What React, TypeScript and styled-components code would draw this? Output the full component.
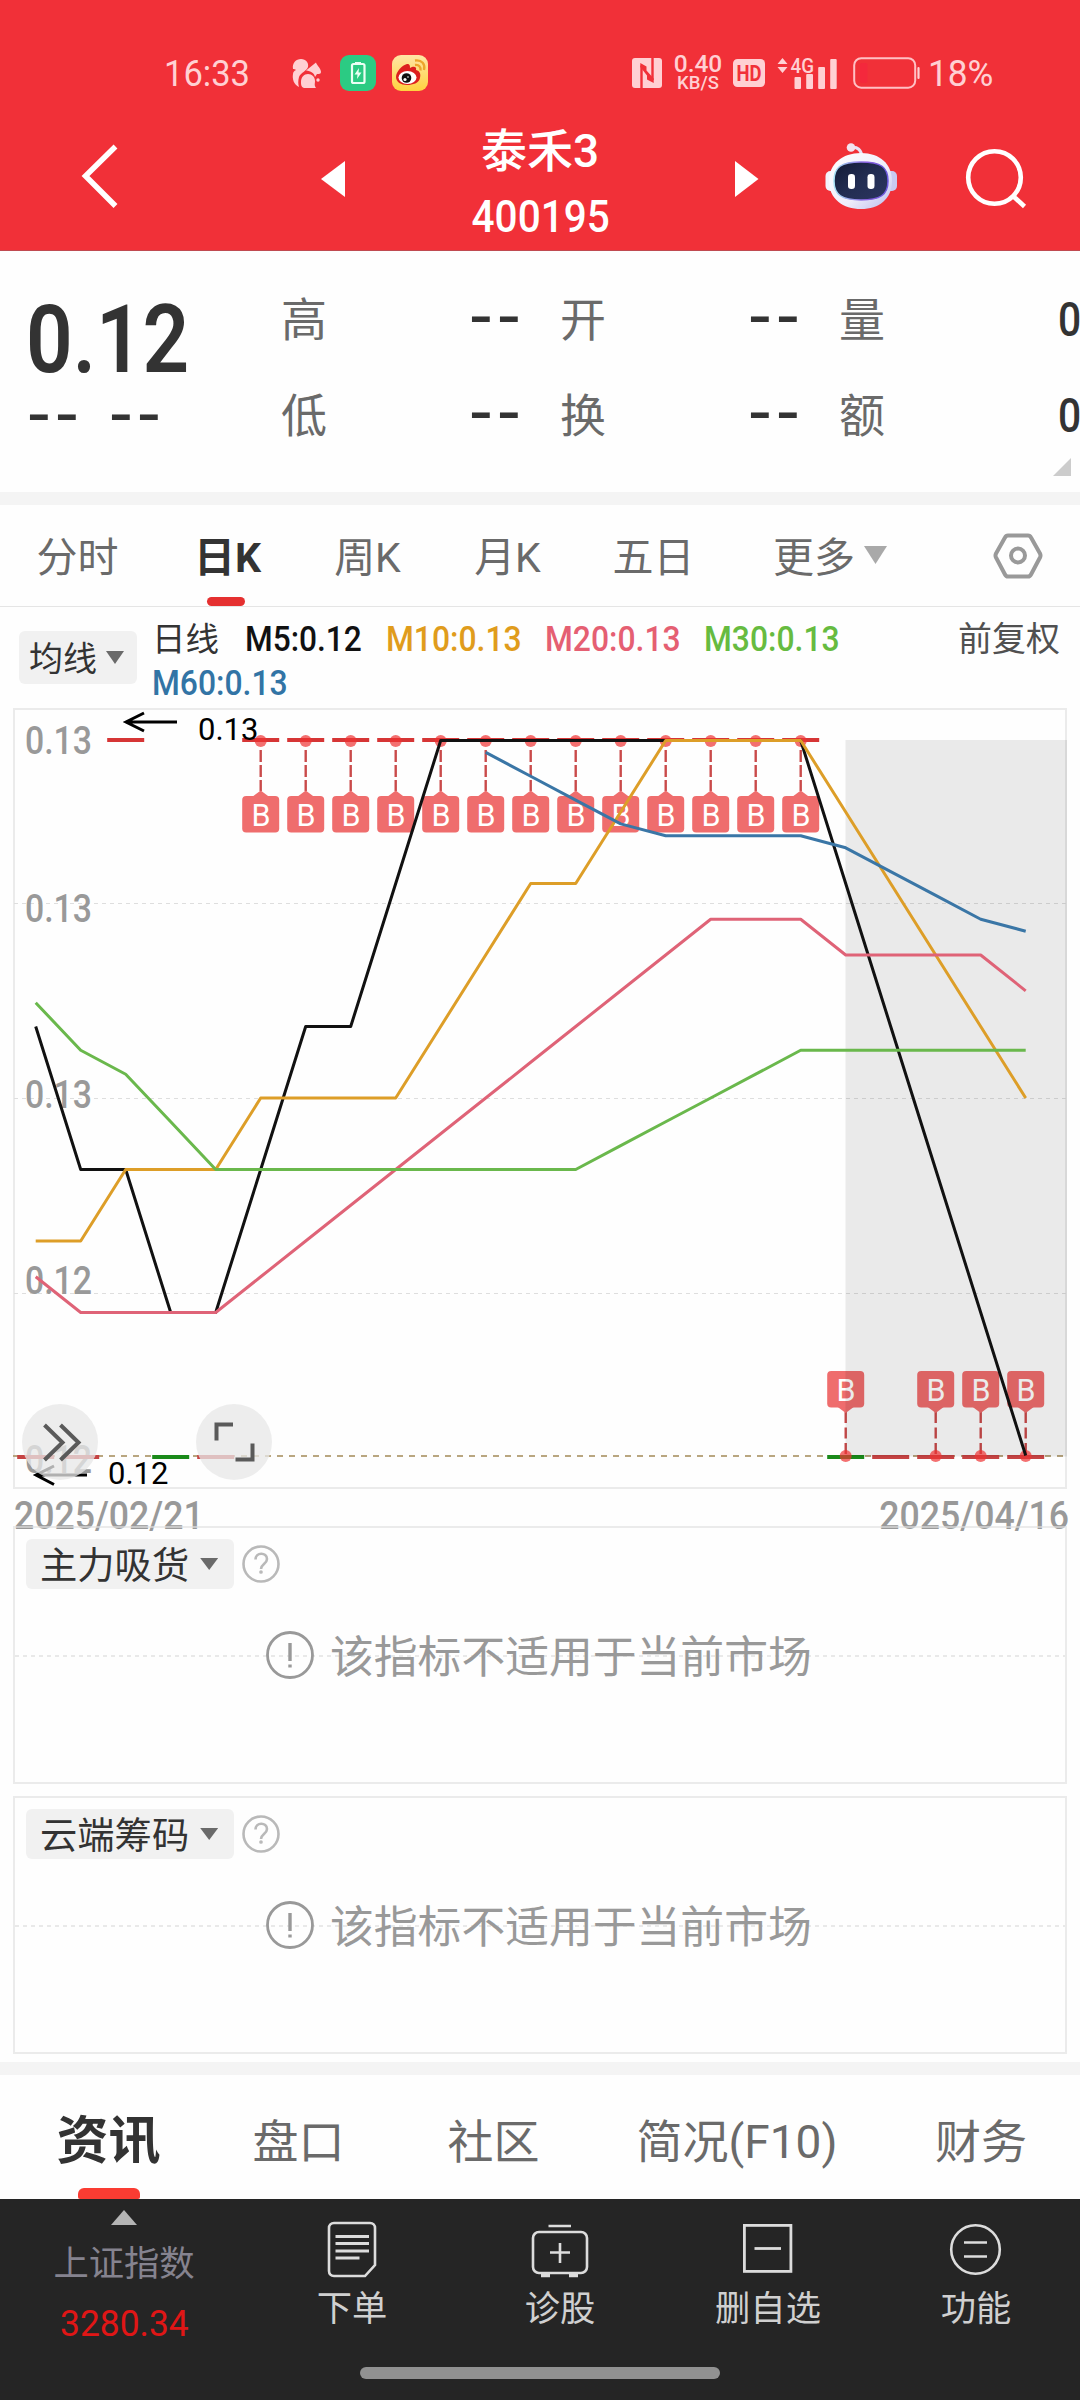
import React from 'react';
import styled, { createGlobalStyle } from 'styled-components';

const Global = createGlobalStyle`
  * { box-sizing: border-box; }
  body { margin: 0; background: #fff; }
  svg { overflow: visible; }
`;

const sans = `Roboto, "Noto Sans CJK SC", sans-serif`;

const Screen = styled.div`
  width: 1080px;
  height: 2400px;
  overflow: hidden;
  display: flex;
  flex-direction: column;
  background: #fefefe;
  font-family: ${sans};
  color: #333;
`;

/* Text squeezed horizontally to imitate a narrow DIN-like face */
const Narrow = styled.span<{ $w: number; $sx: number; $origin?: string }>`
  display: inline-block;
  width: ${p => p.$w}px;
  white-space: nowrap;
  transform: scaleX(${p => p.$sx});
  transform-origin: ${p => p.$origin ?? 'left'} center;
`;

/* ---------- header ---------- */
const Header = styled.header`
  height: 251px;
  flex: none;
  background: #f13038;
  border-bottom: 1px solid #c04a50;
  color: #fff;
`;

const StatusBar = styled.div`
  height: 113px;
  padding: 33px 0 0 164px;
  display: flex;
  align-items: center;
  color: #ffd0d3;
`;

const StatusGroup = styled.div<{ $ml?: number; $w?: number }>`
  display: flex;
  align-items: center;
  flex: none;
  margin-left: ${p => p.$ml ?? 0}px;
  width: ${p => (p.$w ? `${p.$w}px` : 'auto')};
`;

const Clock = styled.div`
  font-size: 37.5px;
  line-height: 44px;
`;

const NetSpeed = styled.div`
  width: 54px;
  display: flex;
  flex-direction: column;
  align-items: center;
  font-weight: 500;
  font-size: 24.5px;
  line-height: 20px;
  small { font-size: 18.5px; line-height: 17px; margin-top: 1px; }
`;

const TitleBar = styled.div`
  height: 138px;
  display: flex;
`;

const BarCell = styled.div<{ $w: number; $pt?: number }>`
  width: ${p => p.$w}px;
  padding-top: ${p => p.$pt ?? 0}px;
  flex: none;
  svg { display: block; }
`;

const TitleBlock = styled.div`
  width: 390px;
  flex: none;
  text-align: center;
`;

const StockName = styled.div`
  font-size: 46px;
  font-weight: 500;
  line-height: 60px;
  padding-top: 8px;
`;

const StockCode = styled.div`
  font-size: 45px;
  font-weight: 500;
  line-height: 50px;
  padding-top: 11px;
`;

/* ---------- quote ---------- */
const Quote = styled.section`
  height: 241px;
  flex: none;
  display: flex;
  position: relative;
`;

const PriceCol = styled.div`
  width: 281px;
  padding-left: 25px;
  flex: none;
`;

const Price = styled.div`
  font-size: 95px;
  font-weight: 600;
  line-height: 100px;
  padding: 39px 0 0 1px;
`;

const Dashes = styled.span`
  display: block;
  width: 56px;
  font-family: "Liberation Mono", monospace;
  font-weight: 700;
  font-size: 46.6px;
  line-height: 50px;
  letter-spacing: -7.2px;
  white-space: nowrap;
  transform: translateX(-5px) scaleX(1.35);
  transform-origin: left center;
  color: #333;
`;

const ChangeRow = styled.div`
  display: flex;
  gap: 26px;
  margin-top: 2px;
`;

const StatGrid = styled.div`
  display: grid;
  grid-template-columns: 279px 279px 243px;
  grid-auto-rows: 96px;
  padding-top: 20px;
  height: 212px;
`;

const Stat = styled.div`
  display: flex;
  align-items: center;
  justify-content: space-between;
  padding-right: 37px;
  &:nth-child(3n) { padding-right: 0; }
`;

const StatLabel = styled.span`
  font-size: 46px;
  line-height: 60px;
  padding-top: 1px;
  color: #6a6a6a;
`;

const StatZero = styled.span`
  font-size: 48px;
  font-weight: 500;
`;

const Corner = styled.i`
  position: absolute;
  right: 9px;
  bottom: 16px;
  border-left: 18px solid transparent;
  border-bottom: 18px solid #ccc;
`;

const Band = styled.div`
  height: 13px;
  flex: none;
  background: #f4f4f4;
`;

/* ---------- period tabs ---------- */
const PeriodTabs = styled.nav`
  height: 102px;
  flex: none;
  display: flex;
  border-bottom: 1px solid #e5e5e5;
`;

const PeriodTab = styled.div<{ $w: number; $on?: boolean }>`
  width: ${p => p.$w}px;
  flex: none;
  display: flex;
  flex-direction: column;
  align-items: center;
  justify-content: space-between;
  font-size: 41px;
  line-height: 60px;
  padding-top: 23px;
  font-weight: ${p => (p.$on ? 700 : 400)};
  color: ${p => (p.$on ? '#333' : '#6a6a6a')};
`;

const PeriodMark = styled.i`
  width: 38px;
  height: 9px;
  border-radius: 5px;
  background: #e53030;
  margin-right: 4px;
`;

const MoreTab = styled.div`
  margin-left: 46px;
  width: 222px;
  display: flex;
  gap: 9px;
  font-size: 41px;
  line-height: 60px;
  padding-top: 23px;
  color: #6a6a6a;
`;

const Caret = styled.i<{ $w: number; $h: number; $c: string; $mt?: number }>`
  flex: none;
  margin-top: ${p => p.$mt ?? 0}px;
  width: ${p => p.$w}px;
  height: ${p => p.$h}px;
  background: ${p => p.$c};
  clip-path: polygon(0 0, 100% 0, 50% 100%);
`;

/* ---------- legend ---------- */
const LegendBar = styled.div`
  height: 101px;
  flex: none;
  display: flex;
  padding: 0 20px 0 19px;
`;

const Picker = styled.div<{ $w: number; $h: number; $fs: number; $gap: number; $pl: number }>`
  display: flex;
  flex: none;
  align-items: center;
  gap: ${p => p.$gap}px;
  padding-left: ${p => p.$pl}px;
  width: ${p => p.$w}px;
  height: ${p => p.$h}px;
  border-radius: 6px;
  background: #f1f1f1;
  color: #333;
  font-size: ${p => p.$fs}px;
  line-height: ${p => p.$h}px;
`;

const PickerText = styled.span`
  padding-top: 3px;
`;

const PickerSlot = styled.div`
  padding-top: 24px;
`;

const LegendItems = styled.div`
  width: 720px;
  flex: none;
  margin-left: 15px;
  padding-top: 11px;
  display: flex;
  flex-wrap: wrap;
  align-content: flex-start;
  font-size: 35px;
  font-weight: 500;
  line-height: 44px;
`;

const LegendItem = styled.span<{ $w: number; $c: string }>`
  width: ${p => p.$w}px;
  color: ${p => p.$c};
  white-space: nowrap;
`;

const LegendName = styled(LegendItem)`
  font-size: 33.5px;
  font-weight: 400;
`;

const Adjust = styled.div`
  margin-left: auto;
  font-size: 34px;
  line-height: 44px;
  padding-top: 10px;
  color: #505050;
`;

/* ---------- chart ---------- */
const ChartBox = styled.section`
  position: relative;
  height: 781px;
  flex: none;
  svg { display: block; }
`;

const RoundButton = styled.button<{ $x: number }>`
  position: absolute;
  left: ${p => p.$x}px;
  top: 696px;
  width: 76px;
  height: 76px;
  padding: 0;
  border: 0;
  border-radius: 50%;
  background: rgba(231, 231, 231, 0.76);
`;

const Dates = styled.div`
  height: 37px;
  flex: none;
  padding: 0 12px 0 14px;
  display: flex;
  justify-content: space-between;
  font-size: 38.5px;
  font-weight: 500;
  line-height: 54px;
  color: #999;
`;

/* ---------- sub indicator panels ---------- */
const SubPanel = styled.section<{ $mb: number }>`
  position: relative;
  height: 258px;
  flex: none;
  margin: 0 13px ${p => p.$mb}px;
  border: 2px solid rgba(225, 225, 225, 0.65);
`;

const SubHead = styled.div`
  display: flex;
  align-items: center;
  gap: 8px;
  padding: 11px 0 0 11px;
`;

const SubEmpty = styled.div`
  height: 64px;
  margin-top: 34px;
  display: flex;
  align-items: center;
  gap: 16px;
  padding-left: 251px;
  background: repeating-linear-gradient(90deg, #e9e9e9 0 4px, transparent 4px 8px) 0 32px / 100% 2px no-repeat;
  font-size: 43.8px;
  color: #999;
  line-height: 64px;
  svg { flex: none; }
`;

const EmptyText = styled.span`
  padding-top: 5px;
`;

/* ---------- content tabs ---------- */
const ContentTabs = styled.nav`
  height: 124px;
  flex: none;
  display: flex;
  overflow: hidden;
`;

const ContentTab = styled.div<{ $w: number; $on?: boolean }>`
  width: ${p => p.$w}px;
  flex: none;
  display: flex;
  flex-direction: column;
  align-items: center;
  justify-content: space-between;
  padding-top: 34px;
  line-height: 66px;
  font-size: ${p => (p.$on ? 52 : 46)}px;
  font-weight: ${p => (p.$on ? 700 : 400)};
  color: ${p => (p.$on ? '#333' : '#6a6a6a')};
`;

const ContentMark = styled.i`
  width: 62px;
  height: 11px;
  border-radius: 6px 6px 2px 2px;
  background: #fa3c32;
`;

/* ---------- bottom bar ---------- */
const BottomBar = styled.footer`
  height: 201px;
  flex: none;
  background: #252525;
  display: flex;
  flex-direction: column;
  align-items: center;
`;

const BottomRow = styled.div`
  height: 168px;
  width: 1080px;
  display: flex;
`;

const IndexCell = styled.div`
  width: 248px;
  flex: none;
  display: flex;
  flex-direction: column;
  align-items: center;
  padding-top: 11px;
`;

const UpCaret = styled.i`
  width: 26px;
  height: 15px;
  background: #b5b5b5;
  clip-path: polygon(50% 0, 100% 100%, 0 100%);
`;

const IndexName = styled.div`
  font-size: 35.3px;
  line-height: 50px;
  margin-top: 14px;
  color: #85838f;
`;

const IndexValue = styled.div`
  font-size: 36.5px;
  line-height: 50px;
  margin-top: 10px;
  color: #e01616;
`;

const Action = styled.div`
  width: 208px;
  flex: none;
  display: flex;
  flex-direction: column;
  align-items: center;
  padding-top: 21px;
  font-size: 35.3px;
  line-height: 50px;
  color: #d0d0d0;
  svg { display: block; margin-bottom: 6px; }
`;

const HomeBar = styled.i`
  width: 360px;
  height: 12px;
  border-radius: 6px;
  background: #919191;
`;

/* ---------- chart data ---------- */
const BASE = 740.5;
const SPAN = 715;
const px = (i: number) => 35.7 + 45 * i;
const toPath = (vals: number[], unit: number, start = 0) =>
  vals.map((v, k) => `${px(start + k).toFixed(1)},${(BASE + (v * SPAN) / unit).toFixed(1)}`).join(' ');

const lines = [
  { c: '#111', p: toPath([2, 3, 3, 4, 4, 3, 2, 2, 1, 0, 0, 0, 0, 0, 0, 0, 0, 0, 1, 2, 3, 4, 5], 5) },
  { c: '#dd9e28', p: toPath([7, 7, 6, 6, 6, 5, 5, 5, 5, 4, 3, 2, 2, 1, 0, 0, 0, 0, 1, 2, 3, 4, 5], 10) },
  { c: '#df6377', p: toPath([15, 16, 16, 16, 16, 15, 14, 13, 12, 11, 10, 9, 8, 7, 6, 5, 5, 5, 6, 6, 6, 6, 7], 20) },
  { c: '#6ab84c', p: toPath([11, 13, 14, 16, 18, 18, 18, 18, 18, 18, 18, 18, 18, 17, 16, 15, 14, 13, 13, 13, 13, 13, 13], 30) },
  { c: '#3a76a6', p: toPath([1, 3, 5, 7, 8, 8, 8, 8, 9, 11, 13, 15, 16], 60, 10) },
];

const topSignals = Array.from({ length: 13 }, (_, k) => k + 5);
const bottomSignals = [18, 20, 21, 22];
const lowBars = [
  { i: 0, c: '#c64343' }, { i: 1, c: '#c64343' }, { i: 3, c: '#1a8a1a' }, { i: 4, c: '#c64343' },
  { i: 18, c: '#1a8a1a' }, { i: 19, c: '#c64343' }, { i: 20, c: '#c64343' }, { i: 21, c: '#c64343' }, { i: 22, c: '#c64343' },
];
const axis = [
  { y: 753.5, t: '0.13' }, { y: 922, t: '0.13' }, { y: 1108, t: '0.13' }, { y: 1294, t: '0.12' }, { y: 1473, t: '0.12' },
];

function Signal({ i, low }: { i: number; low?: boolean }) {
  const x = px(i);
  const boxY = low ? 1371 : 796;
  const tip = low ? `${x - 8},1407 ${x + 8},1407 ${x},1413` : `${x - 8},796.5 ${x + 8},796.5 ${x},790.5`;
  return (
    <g>
      <line x1={x} x2={x} y1={low ? 1412 : 750} y2={low ? 1455 : 791} stroke="#c94a4a" strokeWidth="2.4" strokeDasharray={low ? '11 4.5' : '12 3'} />
      <polygon points={tip} fill="#ef6d6d" />
      <rect x={x - 18.5} y={boxY} width="37" height="36.5" rx="4" fill="#ef6d6d" />
      <text x={x + 0.3} y={boxY + 29.5} fontSize="31" textAnchor="middle" fill="#fff" textLength="19" lengthAdjust="spacingAndGlyphs">B</text>
    </g>
  );
}

function KChart() {
  return (
    <svg width="1080" height="781" viewBox="0 708 1080 781" fontFamily="Roboto, sans-serif">
      <rect x="14" y="709" width="1052" height="779" fill="none" stroke="#ebebeb" strokeWidth="2" />
      {[903.5, 1098.5, 1293.5].map(y => (
        <line key={y} x1="14" x2="1066" y1={y} y2={y} stroke="#dedede" strokeWidth="1" strokeDasharray="4 4" />
      ))}
      {axis.map((a, k) => (
        <text key={k} x="25" y={a.y} fontSize="38.5" fontWeight="500" fill="#999" textLength="67" lengthAdjust="spacingAndGlyphs">{a.t}</text>
      ))}
      <line x1="13" x2="1066" y1="1456" y2="1456" stroke="#b9a680" strokeWidth="2" strokeDasharray="6 6" />
      {[2, ...topSignals].map(i => (
        <rect key={i} x={px(i) - 18.5} y="738" width="37" height="4" fill="#d63535" />
      ))}
      {lowBars.map(b => (
        <rect key={b.i} x={px(b.i) - 18.5} y="1455" width="37" height="4" fill={b.c} />
      ))}
      {topSignals.map(i => <Signal key={i} i={i} />)}
      {bottomSignals.map(i => <Signal key={i} i={i} low />)}
      <rect x="845.5" y="740" width="221.5" height="716.5" fill="rgba(0,0,0,0.08)" />
      {topSignals.map(i => <circle key={i} cx={px(i)} cy="741" r="6" fill="#e33" fillOpacity=".7" />)}
      {bottomSignals.map(i => <circle key={i} cx={px(i)} cy="1456" r="6" fill="#e33" fillOpacity=".7" />)}
      {lines.map(l => (
        <polyline key={l.c} points={l.p} fill="none" stroke={l.c} strokeWidth="3" strokeLinejoin="round" />
      ))}
      <g fill="none" stroke="#000" strokeWidth="3">
        <path d="M177 722H126M144 713L126 722L144 731" />
        <path d="M87 1475H36M54 1466L36 1475L54 1484.5" />
      </g>
      <text x="198" y="739.5" fontSize="31">0.13</text>
      <text x="108" y="1483.5" fontSize="31">0.12</text>
    </svg>
  );
}

/* ---------- icons ---------- */
const Squirrel = () => (
  <svg width="29" height="29" viewBox="0 0 29 29" fill="#ffd0d3">
    <path d="M1 10C0 4 4 0 9 0c5 0 8 4 7 8-1 4-7 5-9 10-1 4-1 7 0 10C2 26 0 20 1 15c0-2 1-3 3-4C3 10 2 10 1 10z" />
    <path d="M14 11.500l10-8c1 3 5 6 5 9.500 0 2-2 2-4 2l-2 3c-1-4-4-6-9-6.500z" />
    <path d="M9 23c0-5 3-8 7-8s7 3 7 7c0 3-1 4 1 7H12c-3-1-3-4-3-6z" />
    <circle cx="26" cy="21" r="1.700" />
  </svg>
);

const PowerApp = () => (
  <svg width="36" height="36" viewBox="0 0 36 36">
    <rect width="36" height="36" rx="9" fill="#2bcb83" />
    <rect x="12" y="9" width="12.500" height="19" rx="1.500" fill="none" stroke="#eafff4" strokeWidth="2.200" />
    <rect x="15" y="7" width="6" height="3" fill="#eafff4" />
    <path d="M19 13l-4.500 6.500h3l-.5 4.500 4.500-6.500h-3z" fill="#eafff4" />
  </svg>
);

const WeiboApp = () => (
  <svg width="36" height="36" viewBox="0 0 36 36">
    <defs>
      <linearGradient id="wb" x1="0" y1="0" x2="0" y2="1">
        <stop offset="0" stopColor="#ffe6a6" /><stop offset="1" stopColor="#ffd23f" />
      </linearGradient>
    </defs>
    <rect width="36" height="36" rx="9" fill="url(#wb)" />
    <path d="M4 22c0-5 6-12 11-13 3 0 3 2 3 4 3-2 7-2 6 2 4 1 5 4 4 8-1 5-7 7-13 7S4 27 4 22z" fill="#dd1f1f" />
    <ellipse cx="15.500" cy="22.500" rx="9" ry="6.500" fill="#fff" />
    <circle cx="14.500" cy="23" r="4.800" fill="#111" />
    <circle cx="13" cy="24.500" r="1.600" fill="#fff" /><circle cx="16" cy="22" r=".8" fill="#fff" />
    <path d="M23 10c4-.5 6 2 5.500 5.500M23 5.500c7-1 10.500 4 9 9.500" fill="none" stroke="#eda52c" strokeWidth="2.300" />
  </svg>
);

const NfcIcon = () => (
  <svg width="30" height="30" viewBox="0 0 30 30">
    <rect width="30" height="30" rx="3" fill="#ffd0d3" />
    <path d="M9.500 30V7.500M20.500 22V0" fill="none" stroke="#f13038" strokeWidth="2.400" />
    <path d="M8.300 5L14.500 8.500v4L21.700 20.500V25L15 21.500v-4L8.300 9z" fill="#f13038" />
  </svg>
);

const HdIcon = () => (
  <svg width="32" height="28" viewBox="0 0 32 28">
    <rect width="32" height="28" rx="4.500" fill="#ffd0d3" />
    <text x="16" y="22" fontFamily="Roboto, sans-serif" fontWeight="700" fontSize="22.500" textAnchor="middle" textLength="25" lengthAdjust="spacingAndGlyphs" fill="#f13038">HD</text>
  </svg>
);

const SignalIcon = () => (
  <svg width="60" height="34" viewBox="777 54 60 34" fill="#ffd0d3">
    <path d="M777.500 62l5-6 5 6zM777.500 65l5 6 5-6z" />
    <text x="790.500" y="71" fontFamily="Roboto, sans-serif" fontWeight="500" fontSize="21" textLength="23.500" lengthAdjust="spacingAndGlyphs">4G</text>
    <rect x="794.500" y="75" width="6.500" height="12" rx="1" />
    <rect x="806.200" y="72" width="6.800" height="15" rx="1" />
    <rect x="818.200" y="65" width="6.800" height="22" rx="1" />
    <rect x="830.200" y="57" width="6.500" height="30" rx="1" />
  </svg>
);

const BatteryIcon = () => (
  <svg width="68" height="32" viewBox="0 0 68 32">
    <rect x="1.200" y="1.200" width="61" height="29.500" rx="7" fill="none" stroke="#ffc0c4" strokeWidth="2" />
    <rect x="7" y="6" width="7.500" height="20" rx="2" fill="#f4283c" />
    <path d="M65.500 11v10" stroke="#ffd0d3" strokeWidth="2.200" strokeLinecap="round" />
  </svg>
);

const Robot = () => (
  <svg width="72" height="68" viewBox="825 142 72 68">
    <defs>
      <linearGradient id="rbHead" x1="0" y1="0" x2="1" y2="1">
        <stop offset="0" stopColor="#fff" /><stop offset=".6" stopColor="#efedfb" /><stop offset="1" stopColor="#b9bbec" />
      </linearGradient>
      <linearGradient id="rbFace" x1="0" y1="0" x2="1" y2="1">
        <stop offset="0" stopColor="#121a35" /><stop offset=".5" stopColor="#232d52" /><stop offset="1" stopColor="#2b3560" />
      </linearGradient>
      <linearGradient id="rbRim" x1="0" y1="0" x2="1" y2="0">
        <stop offset="0" stopColor="#a8e3f5" /><stop offset=".6" stopColor="#8a5fe0" /><stop offset="1" stopColor="#6a57dd" />
      </linearGradient>
    </defs>
    <path d="M851 147.500c6-1 11 2 11 11" fill="none" stroke="#e9e3f7" strokeWidth="3" />
    <circle cx="851" cy="147.500" r="4.300" fill="#f3e3f0" />
    <rect x="825.500" y="171" width="12" height="20" rx="5" fill="#f2f1fb" />
    <rect x="885" y="171" width="12" height="20" rx="5" fill="#c9c9f1" />
    <path d="M861 153c19 0 31 11 31 28 0 18-13 28-31 28s-32-10-32-28c0-17 13-28 32-28z" fill="url(#rbHead)" />
    <path d="M861 162c20 0 27 5 27 19 0 14-8 19-27 19S834 195 834 181c0-14 7-19 27-19z" fill="url(#rbFace)" stroke="url(#rbRim)" strokeWidth="1.500" />
    <rect x="848" y="174" width="7" height="15" rx="3.200" fill="#fff" />
    <rect x="867.500" y="174" width="7" height="15" rx="3.200" fill="#fff" />
  </svg>
);

const HelpIcon = () => (
  <svg width="38" height="38" viewBox="0 0 38 38" fill="none" stroke="#b9b9b9" strokeWidth="2.600">
    <circle cx="19" cy="19" r="17.500" />
    <path d="M13.500 14.500c0-7.500 11.500-7.500 11.500-.5 0 5-6 5-6 10" />
    <circle cx="19" cy="27" r="1.100" fill="#b9b9b9" strokeWidth="1.500" />
  </svg>
);

const AlertIcon = () => (
  <svg width="48" height="48" viewBox="0 0 48 48" fill="none" stroke="#999" strokeWidth="2.800">
    <circle cx="24" cy="24" r="22.500" />
    <path d="M24 12v18M24 33.500v3" strokeWidth="3.400" />
  </svg>
);

const OrderIcon = () => (
  <svg width="50" height="58" viewBox="0 0 50 58" fill="none" stroke="#dcdcdc" strokeWidth="2.600">
    <path d="M7 3h36c3 0 5 2 5 5v37L38 56H7c-3 0-5-2-5-5V8c0-3 2-5 5-5z" />
    <path d="M8.500 16.500h33.500M8.500 23.500h33.500M8.500 31h33.500M8.500 38h24" strokeWidth="3" />
  </svg>
);
const DiagnoseIcon = () => (
  <svg width="58" height="58" viewBox="0 0 58 58" fill="none" stroke="#dcdcdc" strokeWidth="2.600">
    <rect x="2" y="12" width="54" height="41" rx="6" />
    <path d="M17.500 6h22.500M19 32.500h20M29 23v20" />
    <path d="M10 55.500h9M38 55.500h9" strokeWidth="3.500" />
  </svg>
);
const RemoveIcon = () => (
  <svg width="50" height="58" viewBox="0 0 50 58" fill="none" stroke="#dcdcdc" strokeWidth="2.800">
    <rect x="1.400" y="5.400" width="46.500" height="46" />
    <path d="M11.500 28.500h26.500" />
  </svg>
);
const FunctionIcon = () => (
  <svg width="52" height="58" viewBox="0 0 52 58" fill="none" stroke="#dcdcdc" strokeWidth="2.600">
    <circle cx="25.500" cy="29.500" r="24.300" />
    <path d="M14 22.500h23M14 36.500h23" />
  </svg>
);

const SubIndicator = ({ name, mb }: { name: string; mb: number }) => (
  <SubPanel $mb={mb}>
    <SubHead>
      <Picker $w={208} $h={50} $fs={37.3} $gap={11} $pl={14}>
        <PickerText>{name}</PickerText>
        <Caret $w={18} $h={12} $c="#6a6a6a" />
      </Picker>
      <HelpIcon />
    </SubHead>
    <SubEmpty>
      <AlertIcon />
      <EmptyText>该指标不适用于当前市场</EmptyText>
    </SubEmpty>
  </SubPanel>
);

const stats = [
  ['高', '--'], ['开', '--'], ['量', '0'],
  ['低', '--'], ['换', '--'], ['额', '0'],
];

const actions = [
  { t: '下单', icon: <OrderIcon /> },
  { t: '诊股', icon: <DiagnoseIcon /> },
  { t: '删自选', icon: <RemoveIcon /> },
  { t: '功能', icon: <FunctionIcon /> },
];

export default function App() {
  return (
    <Screen>
      <Global />
      <Header>
        <StatusBar>
          <Clock><Narrow $w={128} $sx={0.92}>16:33</Narrow></Clock>
          <StatusGroup><Squirrel /></StatusGroup>
          <StatusGroup $ml={19}><PowerApp /></StatusGroup>
          <StatusGroup $ml={16} $w={240}><WeiboApp /></StatusGroup>
          <StatusGroup><NfcIcon /></StatusGroup>
          <StatusGroup $ml={9}><NetSpeed>0.40<small>KB/S</small></NetSpeed></StatusGroup>
          <StatusGroup $ml={8}><HdIcon /></StatusGroup>
          <StatusGroup $ml={12}><SignalIcon /></StatusGroup>
          <StatusGroup $ml={16}><BatteryIcon /></StatusGroup>
          <StatusGroup $ml={7}><Clock><Narrow $w={70} $sx={0.94}>18%</Narrow></Clock></StatusGroup>
        </StatusBar>
        <TitleBar>
          <BarCell $w={320}>
            <svg width="320" height="138" viewBox="0 113 320 138" fill="none" stroke="#fff" strokeWidth="5.500">
              <path d="M115.500 146.500L85.500 176L115.500 206" />
            </svg>
          </BarCell>
          <BarCell $w={25}>
            <svg width="25" height="138" viewBox="320 113 25 138" fill="#fff"><path d="M345 161v36L321 179z" /></svg>
          </BarCell>
          <TitleBlock>
            <StockName>泰禾3</StockName>
            <StockCode><Narrow $w={152} $sx={0.9} $origin="center">400195</Narrow></StockCode>
          </TitleBlock>
          <BarCell $w={90}>
            <svg width="90" height="138" viewBox="735 113 90 138" fill="#fff"><path d="M735 161v36L758.500 179z" /></svg>
          </BarCell>
          <BarCell $w={141} $pt={29}>
            <Robot />
          </BarCell>
          <BarCell $w={114}>
            <svg width="114" height="138" viewBox="966 113 114 138" fill="none" stroke="#fff" strokeWidth="4.600">
              <circle cx="994.500" cy="177.500" r="26.300" />
              <path d="M1013 196l11.500 10.500" />
            </svg>
          </BarCell>
        </TitleBar>
      </Header>

      <Quote>
        <PriceCol>
          <Price><Narrow $w={190} $sx={0.86}>0.12</Narrow></Price>
          <ChangeRow><Dashes>--</Dashes><Dashes>--</Dashes></ChangeRow>
        </PriceCol>
        <StatGrid>
          {stats.map(([k, v]) => (
            <Stat key={k}>
              <StatLabel>{k}</StatLabel>
              {v === '0' ? <StatZero><Narrow $w={24} $sx={0.85}>0</Narrow></StatZero> : <Dashes>{v}</Dashes>}
            </Stat>
          ))}
        </StatGrid>
        <Corner />
      </Quote>

      <Band />
      <PeriodTabs>
        <PeriodTab $w={155}>分时</PeriodTab>
        <PeriodTab $w={145} $on>日K<PeriodMark /></PeriodTab>
        <PeriodTab $w={135}>周K</PeriodTab>
        <PeriodTab $w={145}>月K</PeriodTab>
        <PeriodTab $w={147}>五日</PeriodTab>
        <MoreTab>更多<Caret $w={23} $h={18} $c="#a9a9a9" $mt={18} /></MoreTab>
        <svg width="50" height="100" viewBox="995 505 50 100" fill="none" stroke="#999" strokeWidth="4" strokeLinejoin="round">
          <path d="M1008 535.500h20q2 0 3 2l9 16q1 2 0 4l-9 17q-1 2-3 2h-20q-2 0-3-2l-9-17q-1-2 0-4l9-16q1-2 3-2z" />
          <circle cx="1018" cy="555.500" r="7" />
        </svg>
      </PeriodTabs>

      <LegendBar>
        <PickerSlot>
          <Picker $w={118} $h={53} $fs={34} $gap={9} $pl={10}>
            <PickerText>均线</PickerText><Caret $w={18} $h={13} $c="#6a6a6a" />
          </Picker>
        </PickerSlot>
        <LegendItems>
          <LegendName $w={93} $c="#333">日线</LegendName>
          <LegendItem $w={141} $c="#111"><Narrow $w={130} $sx={0.905}>M5:0.12</Narrow></LegendItem>
          <LegendItem $w={159} $c="#e09c1c"><Narrow $w={150} $sx={0.91}>M10:0.13</Narrow></LegendItem>
          <LegendItem $w={159} $c="#e55f72"><Narrow $w={150} $sx={0.91}>M20:0.13</Narrow></LegendItem>
          <LegendItem $w={159} $c="#66bb40"><Narrow $w={150} $sx={0.91}>M30:0.13</Narrow></LegendItem>
          <LegendItem $w={159} $c="#3274a5"><Narrow $w={150} $sx={0.91}>M60:0.13</Narrow></LegendItem>
        </LegendItems>
        <Adjust>前复权</Adjust>
      </LegendBar>

      <ChartBox>
        <KChart />
        <RoundButton $x={22}>
          <svg width="76" height="76" viewBox="22 1404 76 76" fill="none" stroke="#5a5a5a" strokeWidth="4">
            <path d="M44.500 1425L62.500 1442.500L44.500 1460M60.500 1425L78.500 1442.500L60.500 1460" />
          </svg>
        </RoundButton>
        <RoundButton $x={196}>
          <svg width="76" height="76" viewBox="196 1404 76 76" fill="none" stroke="#5a5a5a" strokeWidth="4">
            <path d="M233 1424.500H216.500V1440.500M252.500 1443.500V1459.500H235.500" />
          </svg>
        </RoundButton>
      </ChartBox>

      <Dates>
        <Narrow $w={200} $sx={0.925}>2025/02/21</Narrow>
        <Narrow $w={204} $sx={0.925} $origin="right">2025/04/16</Narrow>
      </Dates>

      <SubIndicator name="主力吸货" mb={12} />
      <SubIndicator name="云端筹码" mb={8} />

      <Band />
      <ContentTabs>
        <ContentTab $w={217} $on>资讯<ContentMark /></ContentTab>
        <ContentTab $w={163}>盘口</ContentTab>
        <ContentTab $w={227}>社区</ContentTab>
        <ContentTab $w={260}>简况(F10)</ContentTab>
        <ContentTab $w={228}>财务</ContentTab>
      </ContentTabs>

      <BottomBar>
        <BottomRow>
          <IndexCell>
            <UpCaret />
            <IndexName>上证指数</IndexName>
            <IndexValue><Narrow $w={133} $sx={0.97} $origin="center">3280.34</Narrow></IndexValue>
          </IndexCell>
          {actions.map(a => (
            <Action key={a.t}>{a.icon}{a.t}</Action>
          ))}
        </BottomRow>
        <HomeBar />
      </BottomBar>
    </Screen>
  );
}
